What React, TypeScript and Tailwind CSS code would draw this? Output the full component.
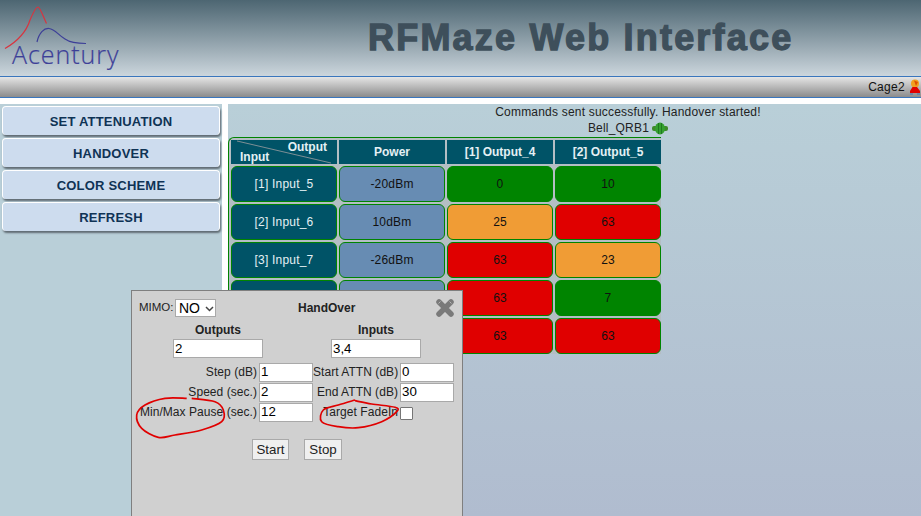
import React from "react";

const sans = "font-['Liberation_Sans',Arial,sans-serif]";

function smooth(p: [number, number][]) {
  let d = `M${p[0][0]} ${p[0][1]}`;
  for (let i = 0; i < p.length - 1; i++) {
    const a = p[Math.max(i - 1, 0)];
    const b = p[i];
    const c = p[i + 1];
    const e = p[Math.min(i + 2, p.length - 1)];
    d += ` C${b[0] + (c[0] - a[0]) / 6} ${b[1] + (c[1] - a[1]) / 6} ${c[0] - (e[0] - b[0]) / 6} ${c[1] - (e[1] - b[1]) / 6} ${c[0]} ${c[1]}`;
  }
  return d;
}

const ring1: [number, number][] = [[186.700, 398.300], [165, 398.300], [145, 405], [136.700, 415], [141.700, 428.300], [158.300, 437.300], [175, 435], [201.700, 430], [221.700, 421.700], [223.300, 410], [215, 401.700], [191.700, 398.300]];
const ring2: [number, number][] = [[355, 400], [338.300, 405], [323.300, 410], [321.700, 421.700], [338.300, 426.700], [358.300, 427.700], [381.700, 421.700], [396.700, 411.700], [395, 407.300], [371.700, 404], [355, 400.700]];

function Logo() {
  return (
    <div className="relative w-[125px] h-[76px] shrink-0">
      <svg width="125" height="76" viewBox="0 0 125 76" className="absolute left-0 top-0">
        <path d="M5 48.500 C18 41 26 33 30 20 C33 13 36 7 38 7 C40 7 42.500 15 46.500 23.500" fill="none" stroke="#d8343f" strokeWidth="1.200" />
        <path d="M37 42 C39 33 44 28 49 28.500 C55 29 58 35 65 39 C70 42.500 76 43.500 86 43.500" fill="none" stroke="#3d3f98" strokeWidth="1.200" />
      </svg>
      <span className="absolute left-[12px] top-[38px] text-[25px] leading-[32px] font-['Open_Sans',sans-serif] font-light text-[#3d3f98] tracking-[0.95px] [-webkit-text-stroke:0.2px_#3d3f98]">Acentury</span>
    </div>
  );
}

function SideButton({ label }: { label: string }) {
  return (
    <button className="h-[29px] w-[218px] ml-[2px] rounded-[4px] bg-[#cddcee] border-t border-l border-r border-white shadow-[1px_2px_2px_#5f6b73] text-[13px] tracking-[0.2px] pt-[1px] font-bold text-[#0f3355] text-center">
      {label}
    </button>
  );
}

function Head({ children }: { children: React.ReactNode }) {
  return <div className="h-[24px] bg-[#005367] text-[#e4f0f4] text-[12px] font-bold flex items-center justify-center">{children}</div>;
}

function Cell({ children, c }: { children?: React.ReactNode; c: string }) {
  return <div className={`h-[36px] rounded-[6px] border border-[#008400] flex items-center justify-center text-[12px] tracking-[0.2px] ${c}`}>{children}</div>;
}

const IN = "bg-[#005367] text-[#e4f0f4]";
const PW = "bg-[#678cb3] text-[#111]";
const G = "bg-[#008400] text-[#111]";
const O = "bg-[#f09c35] text-[#111]";
const R = "bg-[#e00000] text-[#111]";

const rows: [string, string, [string, string], [string, string]][] = [
  ["[1] Input_5", "-20dBm", ["0", G], ["10", G]],
  ["[2] Input_6", "10dBm", ["25", O], ["63", R]],
  ["[3] Input_7", "-26dBm", ["63", R], ["23", O]],
  ["", "", ["63", R], ["7", G]],
  ["", "", ["63", R], ["63", R]],
];

function Field({ v, w = "w-[54px]" }: { v: string; w?: string }) {
  return <input readOnly value={v} className={`${w} h-[19px] bg-white border border-[#a9a9a9] px-[1px] text-[13.300px] text-black outline-none`} />;
}

function FormRow({ a, av, b, bv, check }: { a: string; av: string; b: string; bv?: string; check?: boolean }) {
  return (
    <div className="flex items-center h-[20px] text-[12px] tracking-[0.05px] text-[#222]">
      <span className="w-[125px] text-right pr-[2px] whitespace-nowrap">{a}</span>
      <Field v={av} />
      <span className="w-[87px] text-right pr-[2px] whitespace-nowrap">{b}</span>
      {check ? <span className="w-[13px] h-[13px] mt-[2px] bg-white border border-[#767676] rounded-[1px]" /> : <Field v={bv ?? ""} />}
    </div>
  );
}

function Modal() {
  return (
    <div className="absolute left-[131px] top-[290px] w-[332px] h-[240px] bg-[#d0d0d0] border border-[#7f7f7f] pt-[8px] text-[#222]">
      <div className="flex items-center h-[18px] pl-[7px] relative">
        <span className="text-[11.500px] w-[36px]">MIMO:</span>
        <div className="w-[41px] h-[18px] bg-white border border-[#a9a9a9] flex items-center pl-[3px] text-[14px] leading-none text-black">
          NO
          <svg width="9" height="6" viewBox="0 0 9 6" className="ml-[5px] mt-[2px]"><path d="M1 1 L4.500 4.500 L8 1" fill="none" stroke="#444" strokeWidth="1.500" /></svg>
        </div>
        <span className="ml-[82px] text-[12px] font-bold">HandOver</span>
        <svg width="20" height="20" viewBox="0 0 20 20" className="absolute left-[303px] top-[-1px]">
          <path d="M4 4 L16 16 M16 4 L4 16" stroke="#7a7a7a" strokeWidth="5.500" strokeLinecap="round" />
          <path d="M3.500 5.500 L5.500 3.500 M14.500 3.500 L16.500 5.500" stroke="#b5b5b5" strokeWidth="1" />
        </svg>
      </div>
      <div className="flex mt-[5px]">
        <div className="w-[158px] ml-[41px] flex flex-col">
          <span className="text-[12px] font-bold h-[16px] leading-[16px] w-[90px] text-center">Outputs</span>
          <Field v="2" w="w-[90px] mt-[1px]" />
        </div>
        <div className="flex flex-col">
          <span className="text-[12px] font-bold h-[16px] leading-[16px] w-[90px] text-center">Inputs</span>
          <Field v="3,4" w="w-[90px] mt-[1px]" />
        </div>
      </div>
      <div className="mt-[4px] ml-[2px] flex flex-col">
        <FormRow a="Step (dB)" av="1" b="Start ATTN (dB)" bv="0" />
        <FormRow a="Speed (sec.)" av="2" b="End ATTN (dB)" bv="30" />
        <FormRow a="Min/Max Pause (sec.)" av="12" b="Target FadeIn" check />
      </div>
      <div className="flex mt-[17px] ml-[120px] gap-[15px]">
        <button className="w-[37px] h-[21px] bg-[#efefef] border border-[#a9a9a9] text-[13.300px] leading-none text-[#222]">Start</button>
        <button className="w-[38px] h-[21px] bg-[#efefef] border border-[#a9a9a9] text-[13.300px] leading-none text-[#222]">Stop</button>
      </div>
    </div>
  );
}

export default function App() {
  return (
    <div className={`relative w-[921px] h-[516px] overflow-hidden bg-white ${sans}`}>
      <header className="h-[76px] flex bg-gradient-to-b from-[#4d6672] to-[#ccd6dd]">
        <Logo />
        <div className="flex-1 pl-[243px] pt-[15px]">
          <h1 className={`${sans} font-bold text-[36px] leading-[46px] text-[#3e4f5b] tracking-[2.200px] whitespace-nowrap [-webkit-text-stroke:1.300px_#3e4f5b]`}>RFMaze Web Interface</h1>
        </div>
      </header>
      <div className="h-[22px] border-y border-[#3a76bd] bg-gradient-to-b from-[#e6e6e6] to-[#8c8c8c] flex items-center justify-end">
        <span className="text-[12px] tracking-[0.3px] text-[#111] mr-[4px]">Cage2</span>
        <svg width="12" height="16" viewBox="0 0 12 16">
          <circle cx="6" cy="4.500" r="4" fill="#f0a020" />
          <path d="M5 1.500 L9 3 L7 7 Z" fill="#e05000" />
          <path d="M3.500 8 L8 8 L11 12 L11 14 L1 14 L1 12 Z" fill="#e00000" />
          <path d="M1 15 H4 M8 15 H11" stroke="#3a76bd" strokeWidth="1" />
        </svg>
      </div>
      <div className="h-[6px] bg-white" />
      <div className="flex h-[412px]">
        <aside className="w-[222px] bg-[#b9cfd8] pt-[2px] flex flex-col gap-[3px] shrink-0">
          <SideButton label="SET ATTENUATION" />
          <SideButton label="HANDOVER" />
          <SideButton label="COLOR SCHEME" />
          <SideButton label="REFRESH" />
        </aside>
        <main className="ml-[6px] flex-1 bg-gradient-to-b from-[#b9cfd8] to-[#b0bccf]">
          <div className="h-[33px] text-center text-[12px] tracking-[0.2px] leading-[16px] text-[#222] pl-[107px]">
            <div>Commands sent successfully. Handover started!</div>
            <div className="flex items-center justify-center gap-[3px]">
              Bell_QRB1
              <svg width="16" height="13" viewBox="0 0 16 13">
                <rect x="0" y="4" width="16" height="5" rx="2" fill="#3f8a2a" />
                <ellipse cx="8" cy="6.500" rx="5" ry="6" fill="#35a030" />
                <path d="M6.500 1 V12 M9.500 1 V12" stroke="#1f7a1f" strokeWidth="1" />
              </svg>
            </div>
          </div>
          <div className="w-[433px] border-t border-l border-[#008400] rounded-tl-[6px] bg-[#b4bec4] grid grid-cols-[106px_106px_106px_106px] gap-[2px] pl-[2px] pt-[2px]">
            <div className="relative h-[24px] bg-[#005367] text-[#e4f0f4] text-[12px] font-bold">
              <svg width="106" height="24" className="absolute left-0 top-0"><path d="M6 1 L100 23" stroke="#7d8f95" strokeWidth="1" /></svg>
              <span className="absolute right-[10px] top-[0px] leading-[14px]">Output</span>
              <span className="absolute left-[9px] bottom-[0px] leading-[14px]">Input</span>
            </div>
            <Head>Power</Head>
            <Head>[1] Output_4</Head>
            <Head>[2] Output_5</Head>
            {rows.map((r, i) => (
              <React.Fragment key={i}>
                <Cell c={IN}>{r[0]}</Cell>
                <Cell c={PW}>{r[1]}</Cell>
                <Cell c={r[2][1]}>{r[2][0]}</Cell>
                <Cell c={r[3][1]}>{r[3][0]}</Cell>
              </React.Fragment>
            ))}
          </div>
        </main>
      </div>
      <Modal />
      <svg width="921" height="516" className="absolute left-0 top-0 pointer-events-none">
        <path d={smooth(ring1)} fill="none" stroke="#e00000" strokeWidth="1.700" />
        <path d={smooth(ring2)} fill="none" stroke="#e00000" strokeWidth="1.700" />
      </svg>
    </div>
  );
}
